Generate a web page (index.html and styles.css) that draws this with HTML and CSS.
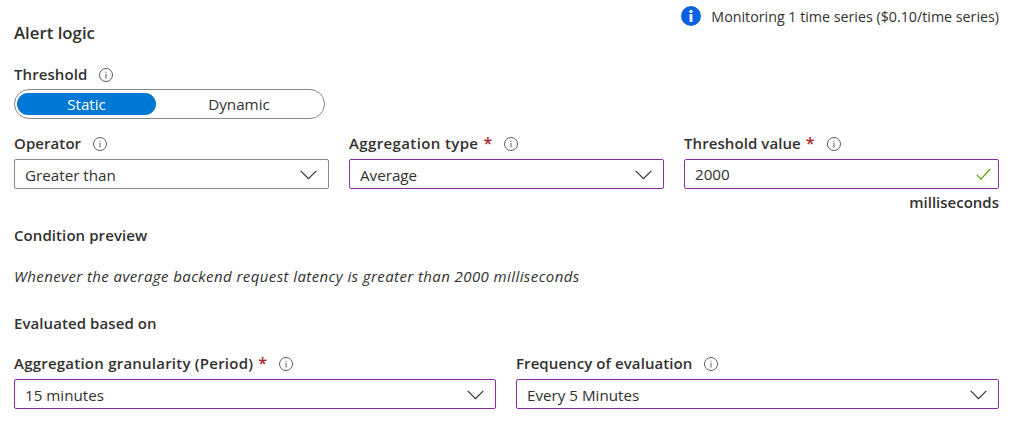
FILE: index.html
```html
<!DOCTYPE html>
<html lang="en">
<head>
<meta charset="utf-8">
<title>Alert logic</title>
<link rel="stylesheet" href="styles.css">
</head>
<body>
<svg class="defs" width="0" height="0" aria-hidden="true">
  <symbol id="info" viewBox="0 0 14 14">
    <circle cx="7" cy="7" r="6.5" fill="none" stroke="#605e5c" stroke-width="1"/>
    <rect x="6.5" y="6" width="1" height="4.5" fill="#605e5c"/>
    <rect x="6.5" y="3.8" width="1" height="1.1" fill="#605e5c"/>
  </symbol>
  <symbol id="chev" viewBox="0 0 17 10">
    <path d="M0.7 0.9 L8.5 8.7 L16.3 0.9" fill="none" stroke="#323130" stroke-width="1.2"/>
  </symbol>
</svg>
<main class="page">
  <div class="notice">
    <svg class="notice-icon" viewBox="0 0 20 20" aria-hidden="true">
      <circle cx="10" cy="10" r="10" fill="#0b62e0"/>
      <rect x="8.6" y="8.2" width="2.8" height="7.8" fill="#fff"/>
      <circle cx="10" cy="5.4" r="1.7" fill="#fff"/>
    </svg>
    <span>Monitoring 1 time series ($0.10/time series)</span>
  </div>
  <h2 class="title">Alert logic</h2>

  <div class="label threshold-label"><span class="txt">Threshold</span><svg class="i"><use href="#info"/></svg></div>
  <div class="toggle">
    <div class="toggle-on">Static</div>
    <div class="toggle-off">Dynamic</div>
  </div>

  <div class="row three">
    <div class="field">
      <div class="label"><span class="txt">Operator</span><svg class="i"><use href="#info"/></svg></div>
      <div class="select plain"><span>Greater than</span><svg class="chev"><use href="#chev"/></svg></div>
    </div>
    <div class="field">
      <div class="label"><span class="txt wide">Aggregation type</span><b class="req">*</b><svg class="i"><use href="#info"/></svg></div>
      <div class="select"><span>Average</span><svg class="chev"><use href="#chev"/></svg></div>
    </div>
    <div class="field">
      <div class="label"><span class="txt">Threshold value</span><b class="req">*</b><svg class="i"><use href="#info"/></svg></div>
      <div class="select input"><span>2000</span>
        <svg class="check" viewBox="0 0 15 13" aria-hidden="true"><path d="M0.8 6.8 L5 11.2 L14.2 1" fill="none" stroke="#57a300" stroke-width="1.2"/></svg>
      </div>
      <div class="unit">milliseconds</div>
    </div>
  </div>

  <div class="label preview-label"><span class="txt">Condition preview</span></div>
  <p class="preview">Whenever the average backend request latency is greater than 2000 milliseconds</p>
  <div class="label eval-label"><span class="txt">Evaluated based on</span></div>

  <div class="row two">
    <div class="field">
      <div class="label"><span class="txt wider">Aggregation granularity (Period)</span><b class="req">*</b><svg class="i"><use href="#info"/></svg></div>
      <div class="select"><span>15 minutes</span><svg class="chev"><use href="#chev"/></svg></div>
    </div>
    <div class="field">
      <div class="label"><span class="txt">Frequency of evaluation</span><svg class="i"><use href="#info"/></svg></div>
      <div class="select"><span>Every 5 Minutes</span><svg class="chev"><use href="#chev"/></svg></div>
    </div>
  </div>
</main>
</body>
</html>
```
FILE: styles.css
```css
* { box-sizing: border-box; }
html, body { margin: 0; background: #fff; }
body {
  font-family: "Open Sans", "Noto Sans", "Liberation Sans", sans-serif;
  font-size: 15.2px;
  color: #323130;
  width: 1020px;
  height: 430px;
  overflow: hidden;
}
.defs { position: absolute; }
.page { padding: 0 21px 0 14px; }
.notice {
  display: flex;
  justify-content: flex-end;
  align-items: center;
  gap: 10px;
  height: 32px;
  font-size: 14.25px;
}
.notice-icon { width: 20px; height: 20px; }
.title {
  margin: -11px 0 0;
  font-size: 16.8px;
  font-weight: 600;
  line-height: 24px;
}
.label {
  height: 20px;
  font-size: 15px;
  font-weight: 600;
  letter-spacing: 0.08px;
  line-height: 20px;
  display: flex;
  align-items: center;
  white-space: pre;
}
.txt { margin-top: -2px; }
.wide { letter-spacing: 0.38px; }
.wider { letter-spacing: 0.23px; }
.threshold-label { margin-top: 20px; }
.i { width: 14px; height: 14px; margin-left: 12px; }
.req { color: #a4262c; font-weight: 600; font-size: 16px; margin: -3px 0 0 5px; }
.toggle {
  margin-top: 4px;
  width: 311px;
  height: 30px;
  border: 1px solid #8a8886;
  border-radius: 15px;
  padding: 3px 2px;
  display: flex;
  text-align: center;
  line-height: 22px;
}
.toggle-on {
  width: 139px;
  background: #0078d4;
  color: #fff;
  border-radius: 11px;
}
.toggle-off { flex: 1; }
.row { display: grid; gap: 20px; }
.three { grid-template-columns: repeat(3, 315px); margin-top: 15px; }
.two { grid-template-columns: 482px 483px; margin-top: 20px; }
.field { min-width: 0; }
.select {
  margin-top: 5px;
  height: 30px;
  border: 1px solid #8a2da5;
  border-radius: 2px;
  padding: 1px 10px 0;
  display: flex;
  align-items: center;
  justify-content: space-between;
}
.select.plain { border-color: #8a8886; }
.select.input { padding: 0 7px 0 10px; }
.chev { width: 17px; height: 10px; margin-right: 1px; }
.check { width: 15px; height: 13px; }
.unit { text-align: right; font-weight: 600; font-size: 15px; line-height: 20px; margin-top: 3px; }
.preview-label { margin-top: 14px; }
.preview { margin: 20px 0 0; font-size: 15px; letter-spacing: 0.41px; font-style: italic; line-height: 20px; }
.eval-label { margin-top: 28px; }
```
